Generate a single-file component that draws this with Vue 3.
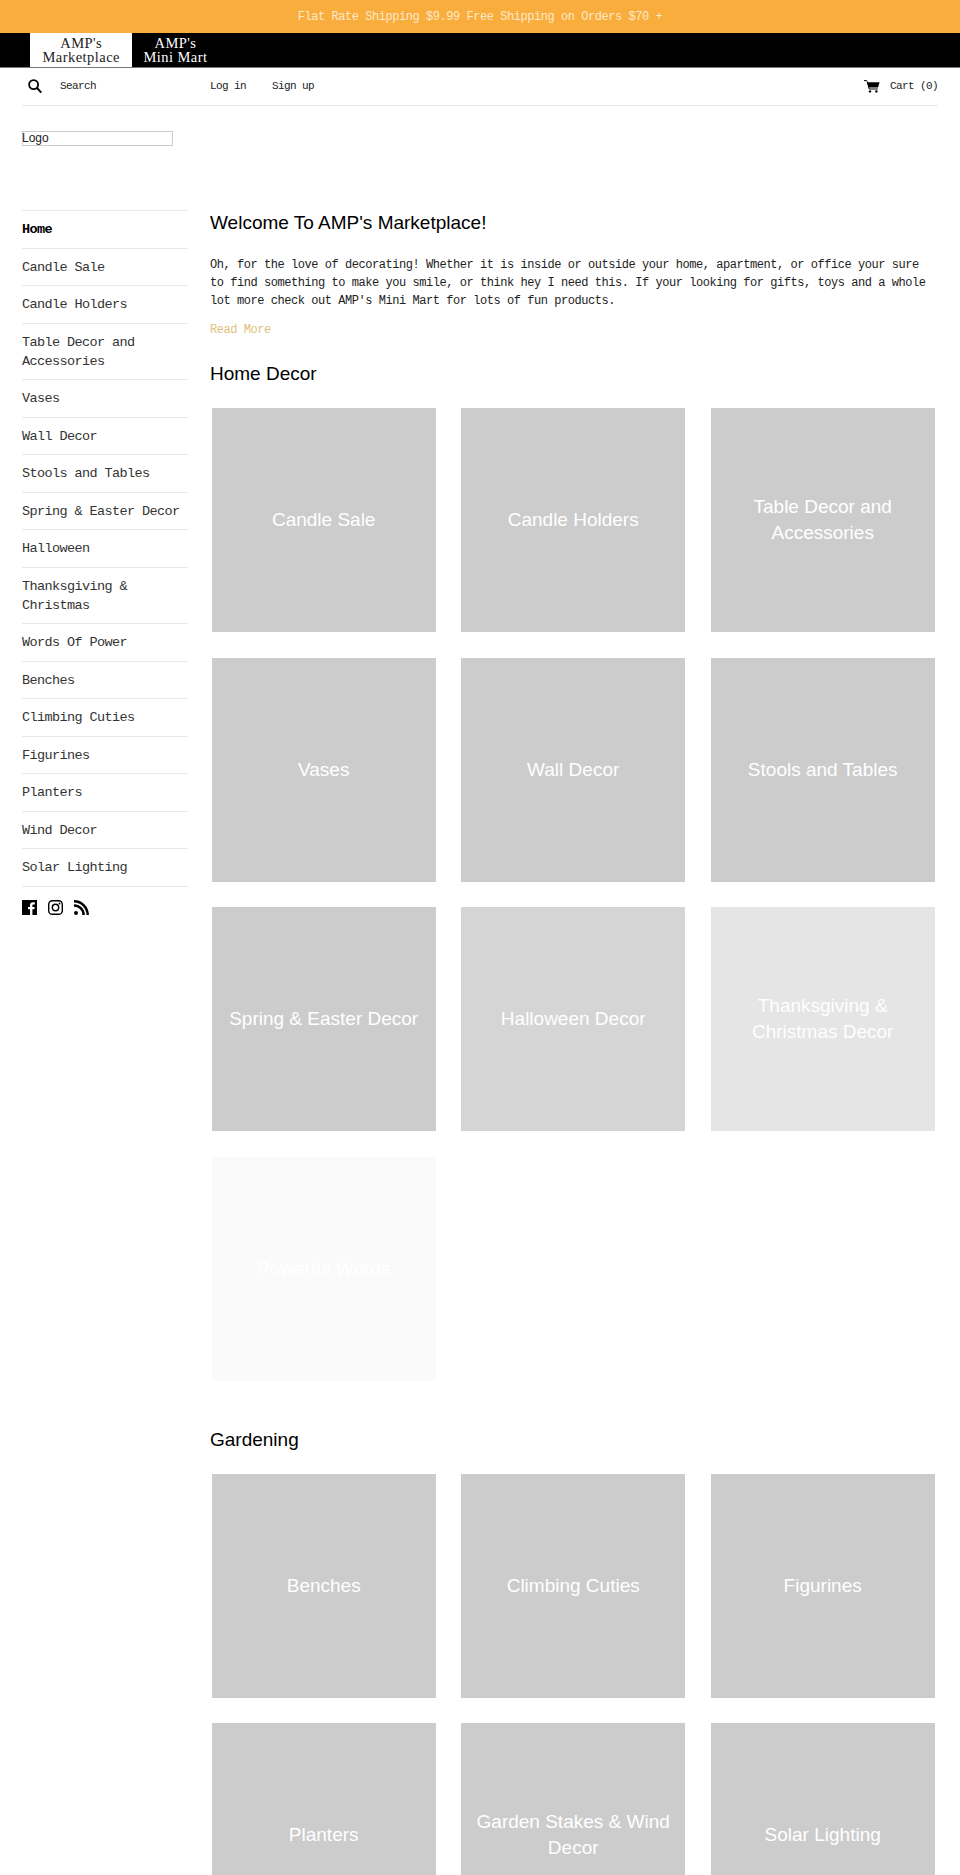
<script setup>
const navItems = [
  'Candle Sale',
  'Candle Holders',
  'Table Decor and Accessories',
  'Vases',
  'Wall Decor',
  'Stools and Tables',
  'Spring & Easter Decor',
  'Halloween',
  'Thanksgiving & Christmas',
  'Words Of Power',
  'Benches',
  'Climbing Cuties',
  'Figurines',
  'Planters',
  'Wind Decor',
  'Solar Lighting'
]

const homeDecor = [
  { title: 'Candle Sale' },
  { title: 'Candle Holders' },
  { title: 'Table Decor and Accessories' },
  { title: 'Vases' },
  { title: 'Wall Decor' },
  { title: 'Stools and Tables' },
  { title: 'Spring & Easter Decor' },
  { title: 'Halloween Decor', fade: 'fade-1' },
  { title: 'Thanksgiving & Christmas Decor', fade: 'fade-2' },
  { title: 'Powerful Words', fade: 'fade-3' }
]

const gardening = [
  { title: 'Benches' },
  { title: 'Climbing Cuties' },
  { title: 'Figurines' },
  { title: 'Planters' },
  { title: 'Garden Stakes & Wind Decor' },
  { title: 'Solar Lighting' }
]
</script>

<template>
  <div class="page">
    <div class="banner">Flat Rate Shipping $9.99 Free Shipping on Orders $70 +</div>

    <div class="store-tabs">
      <a class="tab active">AMP's<br />Marketplace</a>
      <a class="tab">AMP's<br />Mini Mart</a>
    </div>

    <header class="top-bar">
      <div class="search">
        <svg class="search-icon" viewBox="0 0 14 14" width="14" height="14">
          <circle cx="5.6" cy="5.600" r="4.500" fill="none" stroke="#000" stroke-width="1.800" />
          <path d="M8.800 8.800l4.500 4.800" fill="none" stroke="#000" stroke-width="2" />
        </svg>
        <span>Search</span>
      </div>
      <div class="account">
        <a>Log in</a>
        <a>Sign up</a>
      </div>
      <div class="cart">
        <svg viewBox="0 0 16 13" width="16" height="13">
          <path d="M0 .6h2.600l.6.9L5.200 9h8.600" fill="none" stroke="#000" stroke-width="1" />
          <path d="M3.200 2.200H15.600L14 7.600H4.700z" fill="#000" />
          <circle cx="6" cy="11.400" r="1.200" fill="#000" />
          <circle cx="12.400" cy="11.400" r="1.200" fill="#000" />
        </svg>
        <span>Cart (0)</span>
      </div>
    </header>

    <div class="logo-box">Logo</div>

    <div class="layout">
      <aside class="sidebar">
        <ul class="side-nav">
          <li class="current">Home</li>
          <li v-for="item in navItems" :key="item">{{ item }}</li>
        </ul>
        <div class="social">
          <svg viewBox="0 0 15 15" width="15" height="15">
            <path d="M0 0h15v15h-4.600V9.200h2l.3-2.300h-2.300V5.500c0-.7.2-1.100 1.100-1.100h1.300V2.300c-.2 0-1-.1-1.800-.1-1.800 0-3 1.100-3 3.100v1.600h-2v2.300h2V15H0z" fill="#000" />
          </svg>
          <svg viewBox="0 0 15 15" width="15" height="15">
            <rect x=".7" y=".7" width="13.600" height="13.600" rx="3.600" fill="none" stroke="#000" stroke-width="1.400" />
            <circle cx="7.500" cy="7.500" r="3.200" fill="none" stroke="#000" stroke-width="1.400" />
            <circle cx="11.500" cy="3.500" r=".9" fill="#000" />
          </svg>
          <svg viewBox="0 0 15 15" width="15" height="15">
            <circle cx="2" cy="13" r="2" fill="#000" />
            <path d="M0 5.400c5.300 0 9.600 4.300 9.600 9.600M0 1.300c7.600 0 13.700 6.100 13.700 13.700" fill="none" stroke="#000" stroke-width="2.500" />
          </svg>
        </div>
      </aside>

      <main class="content">
        <h1>Welcome To AMP's Marketplace!</h1>
        <p class="intro">
          Oh, for the love of decorating! Whether it is inside or outside your home, apartment, or office your sure
          to find something to make you smile, or think hey I need this. If your looking for gifts, toys and a whole
          lot more check out AMP's Mini Mart for lots of fun products.
        </p>
        <a class="read-more">Read More</a>

        <h2 class="section-title">Home Decor</h2>
        <div class="card-grid">
          <a v-for="card in homeDecor" :key="card.title" class="card" :class="card.fade">
            <span>{{ card.title }}</span>
          </a>
        </div>

        <h2 class="section-title gardening">Gardening</h2>
        <div class="card-grid">
          <a v-for="card in gardening" :key="card.title" class="card">
            <span>{{ card.title }}</span>
          </a>
        </div>
      </main>
    </div>
  </div>
</template>

<style>
html,
body {
  background: #fff;
}
</style>

<style scoped>
.page {
  height: 1875px;
  overflow: hidden;
  font-family: "Liberation Mono", monospace;
  color: #000;
}

.banner {
  height: 33px;
  padding-top: 1px;
  box-sizing: border-box;
  line-height: 33px;
  background: #f9ad3d;
  color: #fde9cb;
  font-size: 12px;
  letter-spacing: -0.45px;
  text-align: center;
}

.store-tabs {
  display: flex;
  height: 34px;
  padding-left: 30px;
  background: #000;
  border-bottom: 1px solid #777;
}

.tab {
  padding: 4px 11px 0;
  font-family: "Liberation Serif", serif;
  font-size: 14.5px;
  line-height: 13.5px;
  letter-spacing: 0.45px;
  text-align: center;
  color: #fff;
}

.tab.active {
  padding: 4px 12.5px 0;
  background: #fff;
  color: #222;
}

.top-bar {
  display: flex;
  align-items: center;
  height: 38px;
  padding-bottom: 1px;
  box-sizing: border-box;
  margin: 0 22px;
  border-bottom: 1px solid #e8e8e8;
  font-size: 11px;
  letter-spacing: -0.6px;
  color: #222;
}

.search {
  display: flex;
  align-items: center;
  gap: 18px;
  width: 188px;
  padding-left: 6px;
  box-sizing: border-box;
}

.account {
  display: flex;
  gap: 26px;
}

.cart {
  display: flex;
  align-items: center;
  gap: 10px;
  margin-left: auto;
}

.logo-box {
  width: 149px;
  height: 13px;
  margin: 25px 0 0 22px;
  border: 1px solid #ccc;
  font-family: "Liberation Sans", sans-serif;
  font-size: 12px;
  line-height: 13px;
  color: #222;
  text-indent: -1px;
}

.layout {
  display: flex;
  gap: 22px;
  margin-top: 64px;
  padding: 0 23px 0 22px;
}

.sidebar {
  flex: 0 0 166px;
}

.side-nav {
  margin: 0;
  padding: 0;
  list-style: none;
  border-top: 1px solid #e8e8e8;
  font-size: 13.5px;
  letter-spacing: -0.6px;
  line-height: 19px;
  color: #333;
}

.side-nav li {
  padding: 9px 0 8.5px;
  border-bottom: 1px solid #e8e8e8;
}

.side-nav .current {
  font-weight: bold;
  color: #000;
}

.social {
  display: flex;
  gap: 11px;
  margin-top: 13px;
}

.content {
  flex: 1;
  min-width: 0;
  padding-top: 1px;
}

h1,
h2 {
  margin: 0;
  font-family: "Liberation Sans", sans-serif;
  font-weight: normal;
  font-size: 19px;
  line-height: 24px;
}

.intro {
  margin: 21px 0 0;
  font-size: 12px;
  letter-spacing: -0.45px;
  line-height: 18px;
  color: #222;
}

.read-more {
  display: block;
  margin-top: 11px;
  font-size: 12px;
  letter-spacing: -0.45px;
  line-height: 18px;
  color: #e0c07c;
}

.section-title {
  margin-top: 23px;
}

.section-title.gardening {
  margin-top: 47px;
}

.card-grid {
  display: grid;
  grid-template-columns: repeat(3, 224px);
  gap: 25.5px;
  margin: 22px 0 0 1.7px;
}

.card {
  display: flex;
  align-items: center;
  justify-content: center;
  height: 224px;
  padding: 0 15px;
  box-sizing: border-box;
  background: #ccc;
  color: #fff;
  font-family: "Liberation Sans", sans-serif;
  font-size: 19px;
  line-height: 26px;
  text-align: center;
}

.fade-1 {
  opacity: 0.82;
}

.fade-2 {
  opacity: 0.5;
}

.fade-3 {
  opacity: 0.08;
}
</style>
